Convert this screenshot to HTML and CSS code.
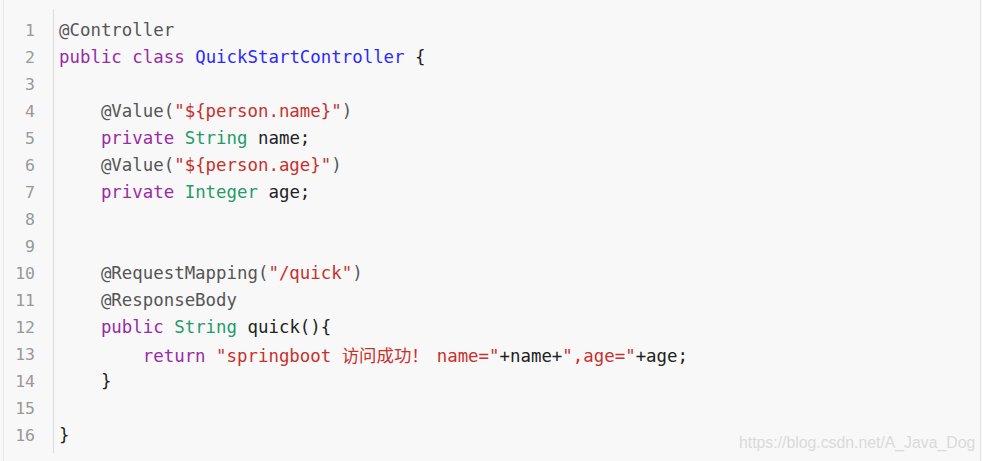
FILE: index.html
```html
<!DOCTYPE html>
<html>
<head>
<meta charset="utf-8">
<link rel="stylesheet" href="styles.css">
</head>
<body>
<div class="frame">
  <div class="code">
    <div class="gutter">
      <div>1</div><div>2</div><div>3</div><div>4</div><div>5</div><div>6</div><div>7</div><div>8</div>
      <div>9</div><div>10</div><div>11</div><div>12</div><div>13</div><div>14</div><div>15</div><div>16</div>
    </div>
    <div class="lines">
      <div class="ln"><span class="an">@Controller</span></div>
      <div class="ln"><span class="kw">public</span> <span class="kw">class</span> <span class="ti">QuickStartController</span> {</div>
      <div class="ln"> </div>
      <div class="ln">    <span class="an">@Value(</span><span class="st">"${person.name}"</span><span class="an">)</span></div>
      <div class="ln">    <span class="kw">private</span> <span class="ty">String</span> name;</div>
      <div class="ln">    <span class="an">@Value(</span><span class="st">"${person.age}"</span><span class="an">)</span></div>
      <div class="ln">    <span class="kw">private</span> <span class="ty">Integer</span> age;</div>
      <div class="ln"> </div>
      <div class="ln"> </div>
      <div class="ln">    <span class="an">@RequestMapping(</span><span class="st">"/quick"</span><span class="an">)</span></div>
      <div class="ln">    <span class="an">@ResponseBody</span></div>
      <div class="ln">    <span class="kw">public</span> <span class="ty">String</span> quick(){</div>
      <div class="ln">        <span class="kw">return</span> <span class="st">"springboot <span class="cjk">访问成功！</span>name="</span>+name+<span class="st">",age="</span>+age;</div>
      <div class="ln">    }</div>
      <div class="ln"> </div>
      <div class="ln">}</div>
    </div>
  </div>
  <div class="watermark">https://blog.csdn.net/A_Java_Dog</div>
</div>
</body>
</html>
```
FILE: styles.css
```css
html, body {
  margin: 0;
  padding: 0;
  background: #f8f8f8;
}
.frame {
  position: relative;
  box-sizing: border-box;
  width: 978px;
  height: 461px;
  margin-left: 3px;
  border-left: 1px solid #e8e8e8;
  border-right: 1px solid #e3e3e3;
  background: #f8f8f8;
}
.code {
  display: flex;
  padding-top: 9px;
  font-family: "DejaVu Sans Mono", "Liberation Mono", "Noto Sans CJK SC", monospace;
  font-size: 17.4px;
  line-height: 27px;
}
.gutter {
  box-sizing: border-box;
  width: 50px;
  height: 444px;
  padding-top: 8px;
  padding-right: 18px;
  text-align: right;
  color: #999;
  font-size: 16.5px;
  border-right: 1px solid #dcdcdc;
}
.lines {
  padding-top: 8px;
  padding-left: 5px;
  color: #222;
}
.ln {
  height: 27px;
  white-space: pre;
}
.an { color: #555; }
.kw { color: #9a2aa6; }
.ti { color: #2a2aff; }
.ty { color: #249b69; }
.st { color: #c8302c; }
.cjk {
  font-family: "Noto Sans CJK SC", sans-serif;
  margin-right: 8px;
}
.watermark {
  position: absolute;
  left: 735px;
  top: 434px;
  font-family: "Liberation Sans", Arial, sans-serif;
  font-size: 15.8px;
  color: #dadada;
  white-space: nowrap;
}
```
